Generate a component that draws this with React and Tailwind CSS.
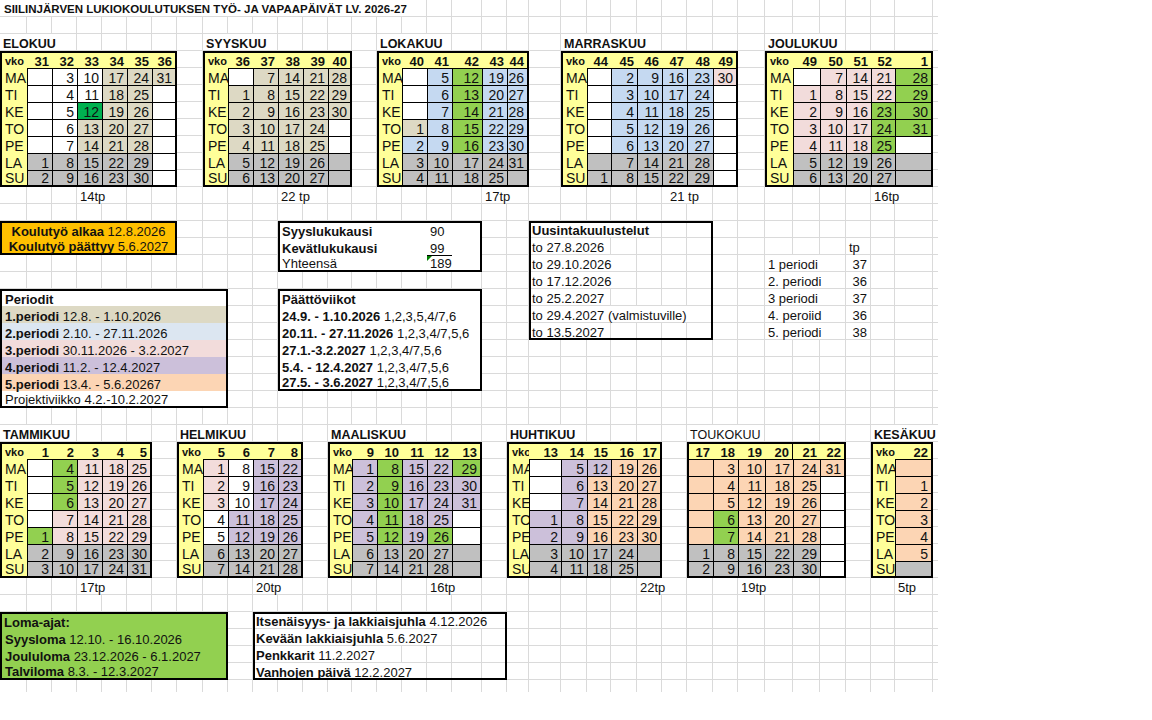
import React, { Fragment } from 'react';
import clsx from 'clsx';

// sheet column widths / row heights, same for the gridlines and the content
const COLS = 'grid-cols-[27px_25px_25px_25px_25px_25px_25px_26px_25px_25px_25px_25px_25px_24px_25px_25px_25px_25px_30px_25px_22px_32px_26px_24px_26px_25px_25px_26px_25px_27px_28px_27px_26px_25px_24px_38px_5px]';
const ROWS = 'grid-rows-[repeat(40,17px)_12px]';

const FILL = {
    w: 'bg-white',
    t: 'bg-[#ddd9c4]',
    b: 'bg-[#c5d9f1]',
    p: 'bg-[#f2dcdb]',
    v: 'bg-[#ccc0da]',
    o: 'bg-[#fcd5b4]',
    g: 'bg-[#c0c0c0]',
    G: 'bg-[#92d050]',
    D: 'bg-[#00b050]',
};

const DAYS = ['MA', 'TI', 'KE', 'TO', 'PE', 'LA', 'SU'];

// each week: [number, "MA TI KE TO PE LA SU"] where a cell is <day><fill letter>
const MONTHS = [
    {
        name: 'ELOKUU', nameAt: 'col-start-1 col-span-6 row-start-3', at: 'col-start-1 col-span-7 row-start-4 row-span-8',
        tp: '14tp', tpAt: 'col-start-4 col-span-3 row-start-12',
        weeks: [
            ['31', 'w w w w w 1g 2g'],
            ['32', '3w 4w 5w 6w 7w 8g 9g'],
            ['33', '10w 11w 12D 13t 14t 15g 16g'],
            ['34', '17t 18t 19t 20t 21t 22g 23g'],
            ['35', '24t 25t 26t 27t 28t 29g 30g'],
            ['36', '31t w w w w w w'],
        ],
    },
    {
        name: 'SYYSKUU', nameAt: 'col-start-9 col-span-6 row-start-3', at: 'col-start-9 col-span-6 row-start-4 row-span-8',
        tp: '22 tp', tpAt: 'col-start-12 col-span-3 row-start-12',
        weeks: [
            ['36', 'w 1t 2t 3t 4t 5g 6g'],
            ['37', '7t 8t 9t 10t 11t 12g 13g'],
            ['38', '14t 15t 16t 17t 18t 19g 20g'],
            ['39', '21t 22t 23t 24t 25t 26g 27g'],
            ['40', '28t 29t 30t w w g g'],
        ],
    },
    {
        name: 'LOKAKUU', nameAt: 'col-start-16 col-span-6 row-start-3', at: 'col-start-16 col-span-6 row-start-4 row-span-8',
        tp: '17tp', tpAt: 'col-start-20 col-span-3 row-start-12',
        weeks: [
            ['40', 'w w w 1t 2b 3g 4g'],
            ['41', '5b 6b 7b 8b 9b 10g 11g'],
            ['42', '12G 13G 14G 15G 16G 17g 18g'],
            ['43', '19b 20b 21b 22b 23b 24g 25g'],
            ['44', '26b 27b 28b 29b 30b 31g g'],
        ],
    },
    {
        name: 'MARRASKUU', nameAt: 'col-start-23 col-span-6 row-start-3', at: 'col-start-23 col-span-7 row-start-4 row-span-8',
        tp: '21 tp', tpAt: 'col-start-27 col-span-3 row-start-12', tpPad: 'pl-[8px] pr-[2px]',
        weeks: [
            ['44', 'w w w w w g 1g'],
            ['45', '2b 3b 4b 5b 6b 7g 8g'],
            ['46', '9b 10b 11b 12b 13b 14g 15g'],
            ['47', '16b 17b 18b 19b 20b 21g 22g'],
            ['48', '23b 24b 25b 26b 27b 28g 29g'],
            ['49', '30p w w w w w w'],
        ],
    },
    {
        name: 'JOULUKUU', nameAt: 'col-start-31 col-span-4 row-start-3', at: 'col-start-31 col-span-6 row-start-4 row-span-8',
        tp: '16tp', tpAt: 'col-start-35 col-span-2 row-start-12',
        weeks: [
            ['49', 'w 1p 2p 3p 4p 5g 6g'],
            ['50', '7p 8p 9p 10p 11p 12g 13g'],
            ['51', '14p 15p 16p 17p 18p 19g 20g'],
            ['52', '21p 22p 23G 24G 25G 26g 27g'],
            ['1', '28G 29G 30G 31G w g g'],
        ],
    },
    {
        name: 'TAMMIKUU', nameAt: 'col-start-1 col-span-6 row-start-26', at: 'col-start-1 col-span-6 row-start-27 row-span-8',
        tp: '17tp', tpAt: 'col-start-4 col-span-3 row-start-35',
        weeks: [
            ['1', 'w w w w 1G 2g 3g'],
            ['2', '4G 5G 6G 7p 8p 9g 10g'],
            ['3', '11p 12p 13p 14p 15p 16g 17g'],
            ['4', '18p 19p 20p 21p 22p 23g 24g'],
            ['5', '25p 26p 27p 28p 29p 30g 31g'],
        ],
    },
    {
        name: 'HELMIKUU', nameAt: 'col-start-8 col-span-5 row-start-26', at: 'col-start-8 col-span-5 row-start-27 row-span-8',
        tp: '20tp', tpAt: 'col-start-11 col-span-3 row-start-35',
        weeks: [
            ['5', '1p 2p 3p 4w 5w 6g 7g'],
            ['6', '8w 9w 10w 11v 12v 13g 14g'],
            ['7', '15v 16v 17v 18v 19v 20g 21g'],
            ['8', '22v 23v 24v 25v 26v 27g 28g'],
        ],
    },
    {
        name: 'MAALISKUU', nameAt: 'col-start-14 col-span-6 row-start-26', at: 'col-start-14 col-span-6 row-start-27 row-span-8',
        tp: '16tp', tpAt: 'col-start-18 col-span-3 row-start-35',
        weeks: [
            ['9', '1v 2v 3v 4v 5v 6g 7g'],
            ['10', '8G 9G 10G 11G 12G 13g 14g'],
            ['11', '15v 16v 17v 18v 19v 20g 21g'],
            ['12', '22v 23v 24v 25v 26G 27g 28g'],
            ['13', '29G 30v 31v w w g g'],
        ],
    },
    {
        name: 'HUHTIKUU', nameAt: 'col-start-21 col-span-6 row-start-26', at: 'col-start-21 col-span-6 row-start-27 row-span-8',
        tp: '22tp', tpAt: 'col-start-26 col-span-3 row-start-35',
        weeks: [
            ['13', 'w w w 1v 2v 3g 4g'],
            ['14', '5v 6v 7v 8v 9v 10g 11g'],
            ['15', '12v 13o 14o 15o 16o 17g 18g'],
            ['16', '19o 20o 21o 22o 23o 24g 25g'],
            ['17', '26o 27o 28o 29o 30o g g'],
        ],
    },
    {
        name: 'TOUKOKUU', nameAt: 'col-start-28 col-span-6 row-start-26', at: 'col-start-28 col-span-6 row-start-27 row-span-8',
        tp: '19tp', tpAt: 'col-start-30 col-span-3 row-start-35', noVko: true, light: true, split: 3,
        weeks: [
            ['17', 'o o o o o 1g 2g'],
            ['18', '3o 4o 5o 6G 7G 8g 9g'],
            ['19', '10o 11o 12o 13o 14o 15g 16g'],
            ['20', '17o 18o 19o 20o 21o 22g 23g'],
            ['21', '24o 25o 26o 27o 28o 29g 30g'],
            ['22', '31o w w w w w w'],
        ],
    },
    {
        name: 'KESÄKUU', nameAt: 'col-start-35 col-span-3 row-start-26', at: 'col-start-35 col-span-2 row-start-27 row-span-8',
        tp: '5tp', tpAt: 'col-start-36 col-span-2 row-start-35',
        weeks: [
            ['22', 'o 1o 2o 3o 4o 5o g'],
        ],
    },
];

// text that spills over the cells to its right hides the gridlines under it
function Text({ at, size = 'text-[13px]', pad = 'px-[3px]', className, children }) {
    return (
        <div className={clsx('self-start justify-self-start h-[16px] flex items-end whitespace-nowrap bg-white leading-none', size, pad, at, className)}>
            {children}
        </div>
    );
}

function Month({ m }) {
    const vko = !m.noVko;
    return (
        <>
            <Text at={m.nameAt} size="text-[12.5px]" className={m.light ? 'font-normal' : 'font-bold'}>{m.name}</Text>
            <div className={clsx('grid grid-cols-subgrid grid-rows-subgrid border-2 border-black', m.at)}>
                {vko && <div className="bg-[#ffff99] flex items-end pl-[3px] pb-px text-[11px] font-bold leading-none">vko</div>}
                {m.weeks.map(([n], i) => (
                    <div
                        key={'h' + i}
                        className={clsx('bg-[#ffff99] flex items-end justify-end pr-[3px] text-[13px] font-bold leading-none', m.split === i && 'border-r border-black')}
                    >
                        {n}
                    </div>
                ))}
                {DAYS.map((d, r) => (
                    <Fragment key={d}>
                        {vko && <div className="bg-[#ffff99] flex items-end pl-[3px] text-[14px] leading-none">{d}</div>}
                        {m.weeks.map(([n, days], i) => {
                            const s = days.split(' ')[r];
                            return (
                                <div
                                    key={d + i}
                                    className={clsx(
                                        'flex items-end justify-end pr-[3px] text-[14px] leading-none border-t border-black',
                                        (vko || i > 0) && 'border-l',
                                        FILL[s.slice(-1)]
                                    )}
                                >
                                    {s.slice(0, -1)}
                                </div>
                            );
                        })}
                    </Fragment>
                ))}
            </div>
            <Text at={m.tpAt} pad={m.tpPad}>{m.tp}</Text>
        </>
    );
}

const PERIODS = [
    ['1.periodi', ' 12.8. - 1.10.2026', 'bg-[#ddd9c4]'],
    ['2.periodi', ' 2.10. - 27.11.2026', 'bg-[#dce6f1]'],
    ['3.periodi', ' 30.11.2026 - 3.2.2027', 'bg-[#f2dcdb]'],
    ['4.periodi', ' 11.2. - 12.4.2027', 'bg-[#ccc0da]'],
    ['5.periodi', ' 13.4. - 5.6.20267', 'bg-[#fcd5b4]'],
];

const FINALS = [
    ['24.9. - 1.10.2026', ' 1,2,3,5,4/7,6'],
    ['20.11. - 27.11.2026', ' 1,2,3,4/7,5,6'],
    ['27.1.-3.2.2027', ' 1,2,3,4/7,5,6'],
    ['5.4. - 12.4.2027', ' 1,2,3,4/7,5,6'],
    ['27.5. - 3.6.2027', ' 1,2,3,4/7,5,6'],
];

const RETAKES = ['to 27.8.2026', 'to 29.10.2026', 'to 17.12.2026', 'to 25.2.2027', 'to 29.4.2027 (valmistuville)', 'to 13.5.2027'];
const RETAKE_ROWS = ['row-start-15', 'row-start-16', 'row-start-17', 'row-start-18', 'row-start-19', 'row-start-20'];

const TP = [
    ['1 periodi', '37', 'row-start-16'],
    ['2. periodi', '36', 'row-start-17'],
    ['3 periodi', '37', 'row-start-18'],
    ['4. peroiid', '36', 'row-start-19'],
    ['5. periodi', '38', 'row-start-20'],
];

const EVENTS = [
    ['Itsenäisyys- ja lakkiaisjuhla', ' 4.12.2026', 'row-start-37'],
    ['Kevään lakkiaisjuhla', ' 5.6.2027', 'row-start-38'],
    ['Penkkarit', ' 11.2.2027', 'row-start-39'],
    ['Vanhojen päivä', ' 12.2.2027', 'row-start-40'],
];

const HOLIDAYS = [
    ['Syysloma', ' 12.10. - 16.10.2026'],
    ['Joululoma', ' 23.12.2026 - 6.1.2027'],
    ['Talviloma', ' 8.3. - 12.3.2027'],
];

export default function App() {
    const lines = [];
    for (let r = 0; r < 41; r++) {
        for (let c = 0; c < 37; c++) {
            lines.push(<div key={r * 37 + c} className={clsx(c < 36 && 'border-r', r < 40 && 'border-b', 'border-[#dadada]')} />);
        }
    }

    return (
        <div className="min-h-[720px] bg-white font-['Liberation_Sans',Arial,sans-serif] text-[#111]">
            <div className="grid">
                {/* gridlines */}
                <div className={clsx('col-start-1 row-start-1 grid', COLS, ROWS)}>{lines}</div>

                {/* sheet content */}
                <div className={clsx('col-start-1 row-start-1 grid', COLS, ROWS)}>
                    <Text at="col-start-1 col-span-20 row-start-1" size="text-[11.5px]" pad="pl-[4px] pr-[2px] pb-px" className="font-bold">
                        SIILINJÄRVEN LUKIOKOULUTUKSEN TYÖ- JA VAPAAPÄIVÄT LV. 2026-27
                    </Text>

                    {MONTHS.map((m) => (
                        <Month key={m.name} m={m} />
                    ))}

                    {/* school year start / end */}
                    <div className="col-start-1 col-span-7 row-start-14 row-span-2 grid grid-cols-subgrid grid-rows-subgrid border-2 border-black bg-[#ffc000] text-[13px] leading-none">
                        <div className="col-span-full flex items-end justify-center whitespace-nowrap">
                            <b>Koulutyö alkaa</b>&nbsp;12.8.2026
                        </div>
                        <div className="col-span-full flex items-end justify-center whitespace-nowrap">
                            <b>Koulutyö päättyy</b>&nbsp;5.6.2027
                        </div>
                    </div>

                    {/* term days */}
                    <div className="col-start-12 col-span-8 row-start-14 row-span-3 grid grid-cols-subgrid grid-rows-subgrid border-2 border-black bg-white text-[13px] leading-none">
                        <div className="col-start-1 col-span-6 row-start-1 flex items-end pl-[2px] font-bold">Syyslukukausi</div>
                        <div className="col-start-7 col-span-2 row-start-1 flex items-end pl-[3px]">90</div>
                        <div className="col-start-1 col-span-6 row-start-2 flex items-end pl-[2px] font-bold">Kevätlukukausi</div>
                        <div className="col-start-7 col-span-2 row-start-2 flex items-end pl-[3px]">99</div>
                        <div className="col-start-1 col-span-6 row-start-3 flex items-end pl-[2px]">Yhteensä</div>
                        <div className="col-start-7 col-span-1 row-start-3 relative flex items-end pl-[3px] border-t border-black">
                            <span className="absolute left-0 top-0 border-t-[5px] border-r-[5px] border-t-[#008000] border-r-transparent" />
                            189
                        </div>
                    </div>

                    {/* retake exams */}
                    <Text at="col-start-22 col-span-7 row-start-14" className="font-bold">Uusintakuulustelut</Text>
                    {RETAKES.map((t, i) => (
                        <Text key={t} at={clsx('col-start-22 col-span-7', RETAKE_ROWS[i])}>{t}</Text>
                    ))}
                    <div className="col-start-22 col-span-7 row-start-14 row-span-7 border-2 border-black" />

                    {/* days per period */}
                    <div className="col-start-34 row-start-15 self-start h-[16px] flex items-end pl-[3px] text-[13px] leading-none">tp</div>
                    {TP.map(([label, n, row]) => (
                        <Fragment key={label}>
                            <Text at={clsx('col-start-31 col-span-3', row)}>{label}</Text>
                            <div className={clsx('col-start-34 self-start h-[16px] flex items-end justify-end pr-[4px] text-[13px] leading-none', row)}>{n}</div>
                        </Fragment>
                    ))}

                    {/* periods */}
                    <div className="col-start-1 col-span-9 row-start-18 row-span-7 grid grid-cols-subgrid grid-rows-subgrid border-2 border-black bg-white text-[13px] leading-none">
                        <div className="col-span-full flex items-end pl-[3px] font-bold">Periodit</div>
                        {PERIODS.map(([b, rest, bg]) => (
                            <div key={b} className={clsx('col-span-full flex items-end pl-[3px] whitespace-pre', bg)}>
                                <b>{b}</b>{rest}
                            </div>
                        ))}
                        <div className="col-span-full flex items-end pl-[3px]">Projektiviikko 4.2.-10.2.2027</div>
                    </div>

                    {/* final exam weeks */}
                    <div className="col-start-12 col-span-8 row-start-18 row-span-6 grid grid-cols-subgrid grid-rows-subgrid border-2 border-black bg-white text-[13px] leading-none">
                        <div className="col-span-full flex items-end pl-[2px] font-bold">Päättöviikot</div>
                        {FINALS.map(([b, rest]) => (
                            <div key={b} className="col-span-full flex items-end pl-[2px] whitespace-pre">
                                <b>{b}</b>{rest}
                            </div>
                        ))}
                    </div>

                    {/* holidays */}
                    <div className="col-start-1 col-span-9 row-start-37 row-span-4 grid grid-cols-subgrid grid-rows-subgrid border-2 border-black bg-[#92d050] text-[13px] leading-none">
                        <div className="col-span-full flex items-end pl-[2px] font-bold">Loma-ajat:</div>
                        {HOLIDAYS.map(([b, rest]) => (
                            <div key={b} className="col-span-full flex items-end pl-[3px] whitespace-pre">
                                <b>{b}</b>{rest}
                            </div>
                        ))}
                    </div>

                    {/* events */}
                    {EVENTS.map(([b, rest, row]) => (
                        <Text key={b} at={clsx('col-start-11 col-span-10', row)} className="whitespace-pre">
                            <b>{b}</b>{rest}
                        </Text>
                    ))}
                    <div className="col-start-11 col-span-10 row-start-37 row-span-4 border-2 border-black" />
                </div>
            </div>
        </div>
    );
}
